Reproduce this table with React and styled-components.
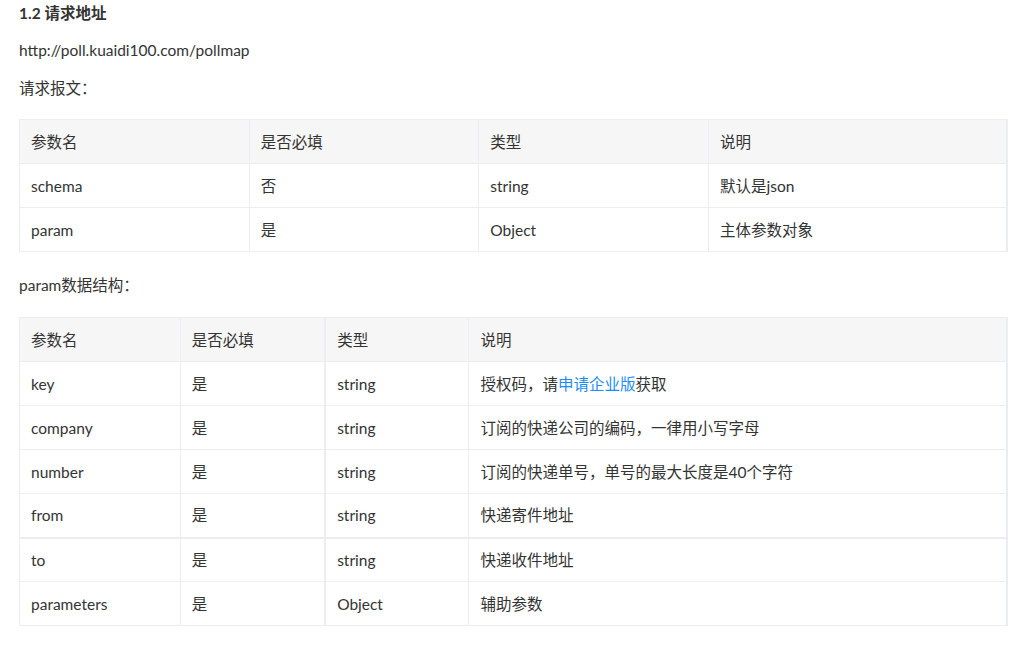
import React from 'react'
import styled, { createGlobalStyle } from 'styled-components'

const GlobalStyle = createGlobalStyle`
  body {
    margin: 0;
    background: #fff;
    color: #333;
    font-family: "Lato", "Noto Sans CJK SC", "Liberation Sans", sans-serif;
    font-size: 15.5px;
  }
`

const Page = styled.div`
  padding: 2px 9px 0 19px;
`

const Heading = styled.h3`
  margin: 0;
  font-size: 15.5px;
  font-weight: bold;
  line-height: 22px;
  color: #333;
`

const Para = styled.p`
  margin: 0;
  line-height: 20px;
  padding-top: ${p => p.top}px;
`

const Table = styled.table`
  width: 989px;
  border-collapse: collapse;
  margin-top: ${p => p.top}px;
  border-right: 2px solid #ebedf3;
`

const Row = styled.tr`
  background: ${p => (p.head ? '#f6f6f6' : '#fff')};
  border-bottom: ${p => (p.thick ? 2 : 1)}px solid #ebedf3;
`

const Cell = styled.td`
  height: 44px;
  padding: 0 11px;
  border: 1px solid #ebedf3;
  border-bottom: none;
  border-right-width: ${p => (p.thick ? 2 : 1)}px;
  width: ${p => p.w}px;
  box-sizing: border-box;
  line-height: 20px;
  vertical-align: middle;
  color: #333;
`

const Link = styled.a`
  color: #1b8cff;
  text-decoration: none;
`

const t1 = [
  ['schema', '否', 'string', '默认是json'],
  ['param', '是', 'Object', '主体参数对象'],
]

const t2 = [
  ['key', '是', 'string', <>授权码，请<Link href="#">申请企业版</Link>获取</>],
  ['company', '是', 'string', '订阅的快递公司的编码，一律用小写字母'],
  ['number', '是', 'string', '订阅的快递单号，单号的最大长度是40个字符'],
  ['from', '是', 'string', '快递寄件地址'],
  ['to', '是', 'string', '快递收件地址'],
  ['parameters', '是', 'Object', '辅助参数'],
]

const head = ['参数名', '是否必填', '类型', '说明']

export default function App() {
  const w1 = [230, 230, 230, 299]
  const w2 = [161, 145, 144, 539]
  return (
    <Page>
      <GlobalStyle />
      <Heading>1.2 请求地址</Heading>
      <Para top={16}>http://poll.kuaidi100.com/pollmap</Para>
      <Para top={18}>请求报文：</Para>
      <Table top={21}>
        <tbody>
          <Row head>
            {head.map((h, i) => <Cell key={i} w={w1[i]}>{h}</Cell>)}
          </Row>
          {t1.map((r, j) => (
            <Row key={j}>
              {r.map((c, i) => <Cell key={i} w={w1[i]}>{c}</Cell>)}
            </Row>
          ))}
        </tbody>
      </Table>
      <Para top={23}>param数据结构：</Para>
      <Table top={22}>
        <tbody>
          <Row head>
            {head.map((h, i) => <Cell key={i} w={w2[i]} thick={i === 1}>{h}</Cell>)}
          </Row>
          {t2.map((r, j) => (
            <Row key={j} thick={j === 3}>
              {r.map((c, i) => <Cell key={i} w={w2[i]} thick={i === 1}>{c}</Cell>)}
            </Row>
          ))}
        </tbody>
      </Table>
    </Page>
  )
}
